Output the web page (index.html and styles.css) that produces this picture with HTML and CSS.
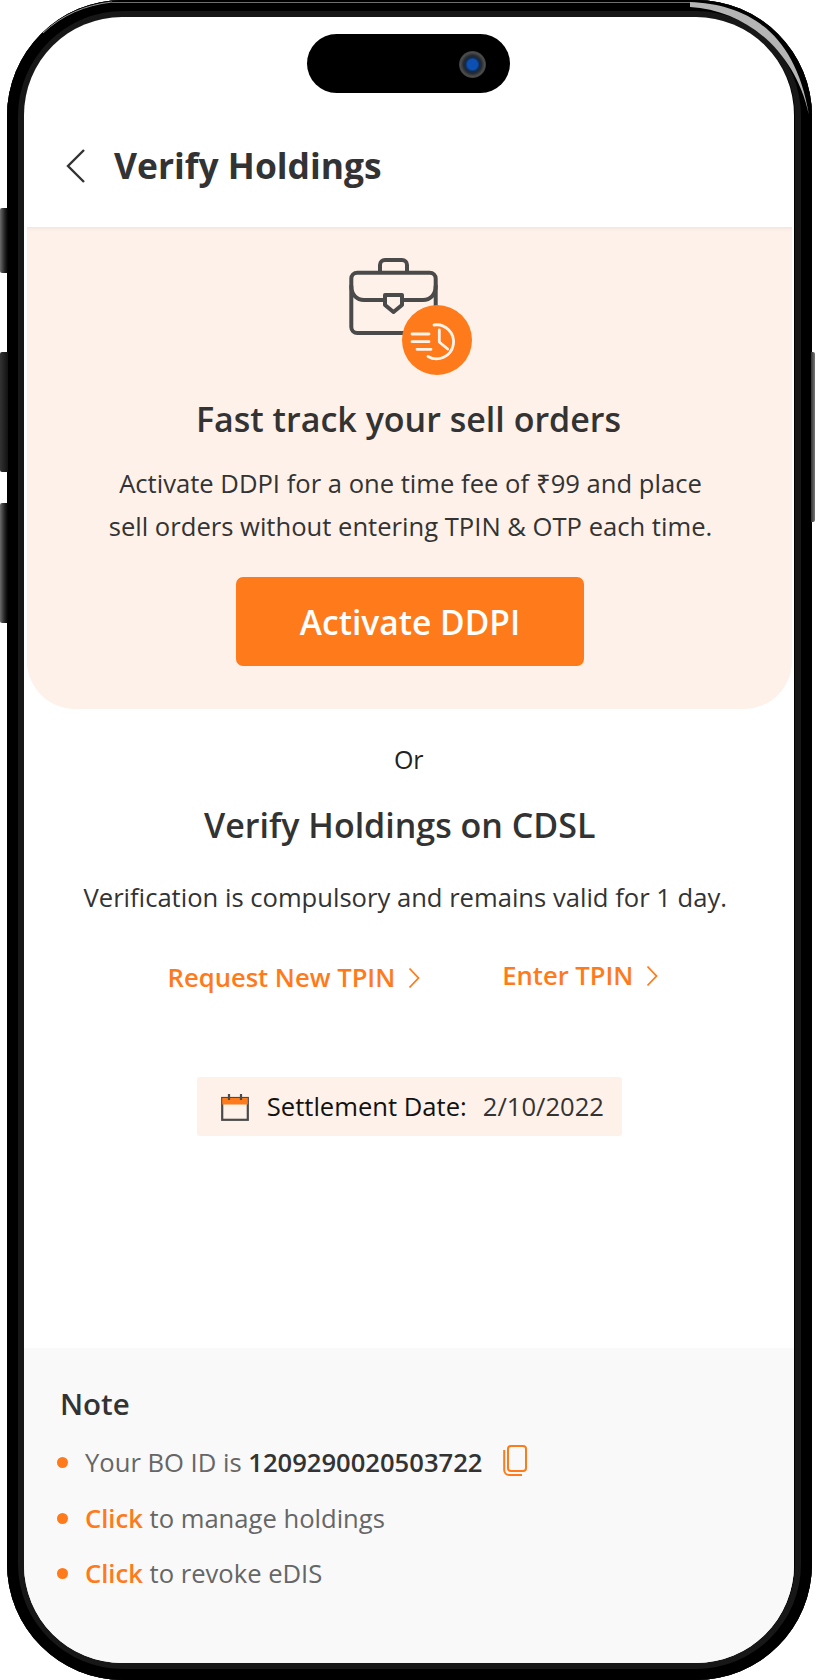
FILE: index.html
```html
<!DOCTYPE html>
<html lang="en">
<head>
<meta charset="utf-8">
<title>Verify Holdings</title>
<link rel="stylesheet" href="styles.css">
</head>
<body>
<div class="phone">
  <span class="side side-mute"></span>
  <span class="side side-up"></span>
  <span class="side side-down"></span>
  <span class="side side-power"></span>
  <span class="glint"></span>
  <svg class="glare glare-right" viewBox="0 0 126 130" aria-hidden="true"><path d="M0 2C55 4 105 30 119 115C105 50 55 10 0 7Z" fill="#b5b5b5"/></svg>
  <svg class="glare glare-left" viewBox="0 0 126 130" aria-hidden="true"><path d="M43 33C62 15 85 5 112 2" fill="none" stroke="#9a9a9a" stroke-width="1"/></svg>
  <main class="screen">
    <div class="island"><span class="camera"></span></div>
    <header class="topbar">
      <svg class="back" viewBox="0 0 20 36" aria-hidden="true"><path d="M18 2 L2 18 L18 34" fill="none" stroke="#333" stroke-width="2.4"/></svg>
      <h1 class="title">Verify Holdings</h1>
    </header>
    <section class="promo">
      <svg class="promo-icon" viewBox="0 0 123 117" aria-hidden="true">
        <g fill="none" stroke="#4a4a4a" stroke-width="4" stroke-linecap="round" stroke-linejoin="round">
          <rect x="2.3" y="14.7" width="84.4" height="60.3" rx="6"/>
          <path d="M31 14V7a5 5 0 0 1 5-5H53a5 5 0 0 1 5 5V14"/>
          <path d="M2.3 28C2.3 37 8 42 15 42H36M53 42H74C81 42 86.7 37 86.7 28"/>
          <path d="M36 37H53V47L44.5 54L36 47Z"/>
        </g>
        <circle cx="88" cy="82" r="35" fill="#ff7a1a"/>
        <g fill="none" stroke="#fff3ea" stroke-width="2.8" stroke-linecap="round" stroke-linejoin="round">
          <path d="M85 67A17 17 0 1 1 79 98.5"/>
          <path d="M90.3 72V84L98.7 91"/>
          <path d="M63 76H80M63 83.7H80M68 91.3H82"/>
        </g>
      </svg>
      <h2 class="promo-title">Fast track your sell orders</h2>
      <p class="promo-text">Activate DDPI for a one time fee of ₹99 and place<br>sell orders without entering TPIN &amp; OTP each time.</p>
      <button class="cta" type="button">Activate DDPI</button>
    </section>
    <section class="verify">
      <p class="or">Or</p>
      <h2 class="verify-title">Verify Holdings on CDSL</h2>
      <p class="verify-text">Verification is compulsory and remains valid for 1 day.</p>
      <div class="links">
        <a class="link link-low">Request New TPIN
          <svg class="chev" viewBox="0 0 12 22" aria-hidden="true"><path d="M1.5 1.5L10.5 11L1.5 20.5" fill="none" stroke="#ff7a1a" stroke-width="1.8"/></svg></a>
        <a class="link">Enter TPIN
          <svg class="chev" viewBox="0 0 12 22" aria-hidden="true"><path d="M1.5 1.5L10.5 11L1.5 20.5" fill="none" stroke="#ff7a1a" stroke-width="1.8"/></svg></a>
      </div>
      <div class="settle">
        <svg class="cal" viewBox="0 0 28 28" aria-hidden="true">
          <rect x="1.2" y="5" width="25.6" height="21.8" fill="none" stroke="#4a4a4a" stroke-width="2.2"/>
          <rect x="1.2" y="5" width="25.6" height="6.5" fill="#ff7a1a"/>
          <path d="M8 1V7M20 1V7" stroke="#4a4a4a" stroke-width="2.2"/>
        </svg>
        <span class="settle-label">Settlement Date:</span>
        <span class="settle-date">2/10/2022</span>
      </div>
    </section>
    <footer class="note">
      <h3 class="note-title">Note</h3>
      <ul class="note-list">
        <li class="note-item">Your BO ID is&nbsp;<b class="bo">1209290020503722</b>
          <svg class="copy" viewBox="0 0 24 31" aria-hidden="true">
            <rect x="5" y="1" width="18" height="25" rx="3" fill="none" stroke="#ff7a1a" stroke-width="2"/>
            <path d="M1.2 5V25a5 5 0 0 0 5 5H19" fill="none" stroke="#ff7a1a" stroke-width="2"/>
          </svg>
        </li>
        <li class="note-item"><span class="click">Click</span>&nbsp;to manage holdings</li>
        <li class="note-item"><span class="click">Click</span>&nbsp;to revoke eDIS</li>
      </ul>
    </footer>
  </main>
</div>
</body>
</html>
```

FILE: styles.css
```css
* { box-sizing: border-box; }
html, body { margin: 0; padding: 0; background: #fff; }
body { width: 816px; height: 1680px; overflow: hidden; font-family: "Open Sans", sans-serif; }

.phone {
  position: relative;
  width: 805px;
  height: 1680px;
  margin-left: 7px;
  padding: 17px 18px 17px 16.5px;
  background: #000;
  border-radius: 116px;
  box-shadow: inset 0 0 0 11px #000, inset 0 0 0 17px #171717;
}
.side { position: absolute; left: -7px; width: 8px; background: linear-gradient(90deg, #6a6a6a, #222 60%, #000); border-radius: 2px 0 0 2px; }
.side-mute { top: 208px; height: 65px; }
.side-up { top: 352px; height: 120px; background: linear-gradient(90deg, #333, #111); }
.side-down { top: 503px; height: 120px; }
.side-power { top: 352px; height: 170px; left: auto; right: -3px; width: 4px; border-radius: 0 2px 2px 0; background: linear-gradient(90deg, #333, #777); }
.glint { position: absolute; top: 2px; left: 105px; width: 578px; height: 1px; background: #6e6e6e; }
.glare { position: absolute; top: 0; width: 126px; height: 130px; }
.glare-right { left: 683px; }
.glare-left { left: -7px; }

.screen {
  position: relative;
  display: flex;
  flex-direction: column;
  height: 100%;
  background: #fff;
  border-radius: 98px;
  overflow: hidden;
  color: #333;
}
.island {
  position: absolute;
  top: 17px;
  left: 283.5px;
  width: 203px;
  height: 59px;
  background: #000;
  border-radius: 30px;
}
.camera {
  position: absolute;
  top: 16.5px;
  right: 24.5px;
  width: 27px;
  height: 27px;
  border-radius: 50%;
  background: radial-gradient(circle at 50% 50%, #0c50b4 0 5px, #102a50 7px, #262a30 9px, #4d4d4d 12px, #3a3a3a 13.5px);
}

.topbar {
  display: flex;
  align-items: center;
  gap: 28px;
  height: 210px;
  padding: 86px 0 0 42.5px;
  flex: none;
}
.back { width: 20px; height: 36px; flex: none; margin-top: 2px; }
.title { margin: 0; font-size: 35.4px; font-weight: 700; line-height: 46px; color: #333; }

.promo {
  flex: none;
  display: flex;
  flex-direction: column;
  align-items: center;
  height: 482px;
  margin: 0 2px 0 3.5px;
  padding-top: 31px;
  background: #fef1e9;
  border-radius: 0 0 48px 48px;
  box-shadow: inset 0 4px 4px -3px #e9e3de;
}
.promo-icon { width: 123px; height: 117px; margin-left: 1px; flex: none; }
.promo-title { margin: 22px 2px 0 0; font-size: 34px; line-height: 44px; font-weight: 600; color: #333; }
.promo-text { margin: 21px 0 0 2px; font-size: 25.6px; line-height: 43px; text-align: center; color: #333; }
.cta {
  width: 348px;
  height: 89px;
  margin: 29px 0 0 1px;
  border: 0;
  border-radius: 7px;
  background: #ff7a1a;
  color: #fff;
  font: 600 33.6px "Open Sans", sans-serif;
}

.verify { flex: none; display: flex; flex-direction: column; align-items: center; }
.or { margin: 34px 0 0 0; font-size: 25px; line-height: 32px; font-weight: 500; color: #222; }
.verify-title { margin: 28px 18px 0 0; font-size: 34px; line-height: 44px; font-weight: 600; color: #333; }
.verify-text { margin: 33px 7px 0 0; font-size: 25.6px; line-height: 36px; color: #333; }
.links { display: flex; align-items: flex-start; gap: 82px; margin: 43px 0 0 8.5px; }
.link { display: flex; align-items: center; gap: 13px; font-size: 25.6px; line-height: 34px; font-weight: 600; color: #ff7a1a; }
.link-low { margin-top: 2px; }
.chev { width: 12px; height: 22px; flex: none; }
.settle {
  display: flex;
  align-items: center;
  width: 425px;
  height: 59px;
  margin: 82px 0 0 1px;
  padding-left: 24px;
  background: #fef1e9;
  border-radius: 3px;
  font-size: 25.6px;
  color: #111;
}
.cal { width: 28px; height: 28px; flex: none; margin-right: 18px; }
.settle-date { margin-left: 16px; color: #333; }

.note {
  flex: 1;
  margin-top: 212px;
  padding: 32.5px 0 0 36.5px;
  background: #f9f9f9;
}
.note-title { margin: 0; font-size: 29.5px; line-height: 46px; font-weight: 600; color: #333; }
.note-list { list-style: none; margin: 8px 0 0; padding: 0; }
.note-item { display: flex; align-items: center; height: 55.7px; font-size: 25.6px; color: #666; }
.note-item::before {
  content: "";
  width: 11px;
  height: 11px;
  margin-right: 17.5px;
  margin-left: -3.5px;
  border-radius: 50%;
  background: #ff7a1a;
  flex: none;
}
.bo { font-weight: 600; color: #333; }
.click { font-weight: 600; color: #ff7a1a; }
.copy { width: 24px; height: 31px; margin: -3px 0 0 21px; flex: none; }
```
